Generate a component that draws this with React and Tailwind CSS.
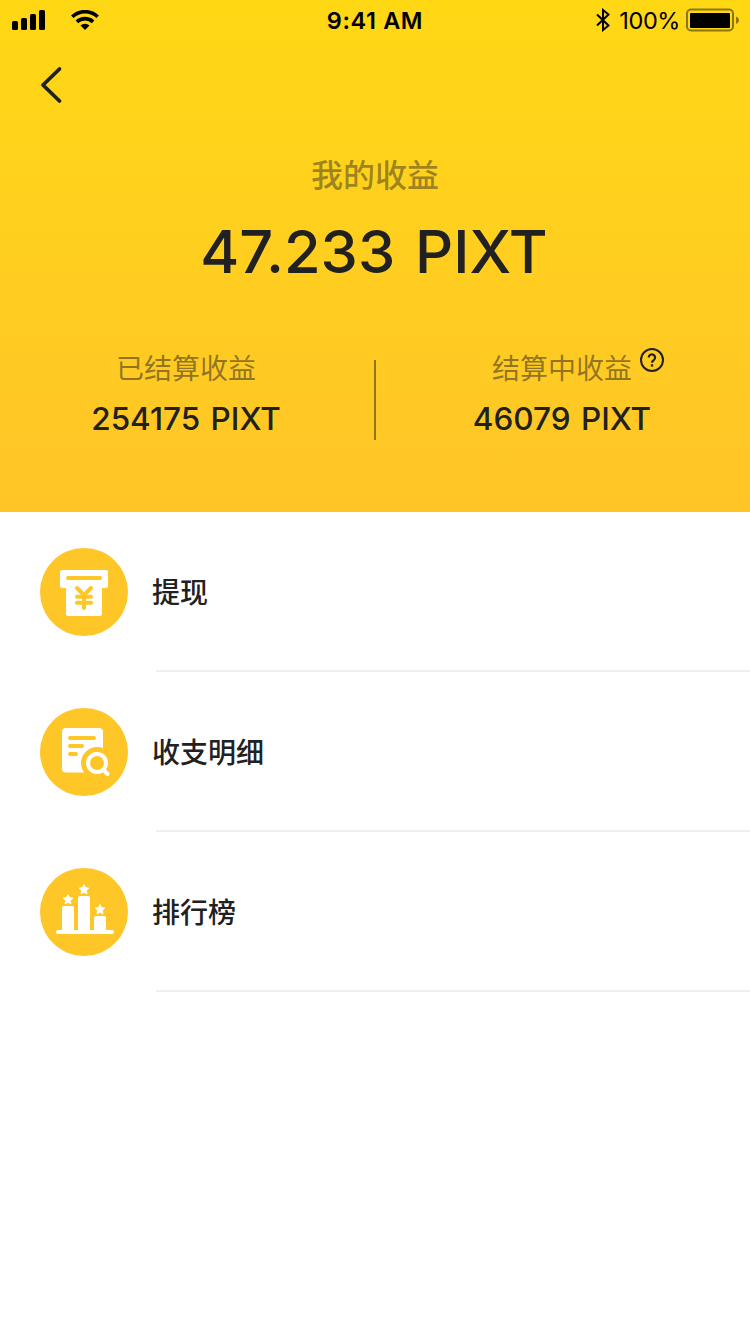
const menuItems = [
  { label: '提现', Icon: WithdrawIcon },
  { label: '收支明细', Icon: DetailsIcon },
  { label: '排行榜', Icon: RankingIcon },
];

function WithdrawIcon() {
  return (
    <svg viewBox="0 0 88 88" className="size-[88px] shrink-0">
      <circle cx="44" cy="44" r="44" fill="#ffc627" />
      <path d="M22 22h44a2 2 0 0 1 2 2v14a2 2 0 0 1-2 2h-4v26a2 2 0 0 1-2 2H28a2 2 0 0 1-2-2V40h-4a2 2 0 0 1-2-2V24a2 2 0 0 1 2-2z" fill="#fff" />
      <g stroke="#ffc627" strokeWidth="4" strokeLinecap="round" strokeLinejoin="round" fill="none">
        <path d="M28 30h32" />
        <path d="M37 40l7 7 7-7M37 48.700h14M37 54.700h14M44 47v13" />
      </g>
    </svg>
  );
}

function DetailsIcon() {
  return (
    <svg viewBox="0 0 88 88" className="size-[88px] shrink-0">
      <circle cx="44" cy="44" r="44" fill="#ffc627" />
      <rect x="22" y="20" width="41" height="44.500" rx="4" fill="#fff" />
      <path d="M30 30h24M30 38h12M30 46h6" stroke="#ffc627" strokeWidth="4" strokeLinecap="round" />
      <circle cx="57" cy="55" r="16" fill="#ffc627" />
      <circle cx="57" cy="55" r="9" fill="none" stroke="#fff" strokeWidth="4" />
      <path d="M63.500 62l4 4" stroke="#fff" strokeWidth="4" strokeLinecap="round" />
    </svg>
  );
}

function RankingIcon() {
  return (
    <svg viewBox="0 0 88 88" className="size-[88px] shrink-0">
      <circle cx="44" cy="44" r="44" fill="#ffc627" />
      <g fill="#fff">
        <rect x="16" y="62" width="58" height="4" rx="2" />
        <path d="M22 63V40a2 2 0 0 1 2-2h8a2 2 0 0 1 2 2v23zM38 63V30a2 2 0 0 1 2-2h8a2 2 0 0 1 2 2v33zM54 63V50a2 2 0 0 1 2-2h8a2 2 0 0 1 2 2v13z" />
        <g stroke="#fff" strokeWidth="0.800" strokeLinejoin="round">
          <path id="star" d="M44 16.500l1.500 3.100 3.400.5-2.500 2.400.6 3.400-3-1.600-3 1.600.6-3.400-2.500-2.400 3.400-.5z" />
          <use href="#star" x="-16" y="10" />
          <use href="#star" x="16" y="20" />
        </g>
      </g>
    </svg>
  );
}

function StatusBar() {
  return (
    <div className="grid h-10 grid-cols-3 items-center pr-[11px] pl-3 font-['Inter',sans-serif] text-[23.5px] text-black">
      <div className="flex items-center gap-[26px]">
        <svg viewBox="0 0 33 20" className="h-5 w-[33px]">
          <rect y="11" width="6" height="9" rx="1.500" />
          <rect x="9" y="8" width="6" height="12" rx="1.500" />
          <rect x="18" y="4" width="6" height="16" rx="1.500" />
          <rect x="27" width="6" height="20" rx="1.500" />
        </svg>
        <svg viewBox="0 0 28 20" className="h-5 w-7">
          <g fill="none" stroke="#000" strokeWidth="3.600">
            <path d="M1.300 6.800a18.200 18.200 0 0 1 25.400 0" />
            <path d="M5.900 11.900a11.700 11.700 0 0 1 16.200 0" />
          </g>
          <path d="M9.500 15.500a6.500 6.500 0 0 1 9 0L14 20z" />
        </svg>
      </div>
      <span className="pt-[2px] pr-px text-center font-semibold tracking-[0.6px] whitespace-nowrap">9:41 AM</span>
      <div className="flex items-center justify-end">
        <svg viewBox="0 0 14 24" className="mr-[9px] h-6 w-[14px]" fill="none" stroke="#000" strokeWidth="2">
          <path d="M1 6.500l11.500 11L7 22V2l5.500 4.500L1 17.500" />
        </svg>
        <span className="mr-[6px] pt-[2px] tracking-[-0.4px]">100%</span>
        <svg viewBox="0 0 53 24" className="h-6 w-[53px]">
          <rect x="1" y="1.500" width="46" height="21" rx="4" fill="none" stroke="#000" strokeOpacity="0.450" strokeWidth="2" />
          <rect x="4" y="5" width="40" height="15" rx="1" />
          <path d="M50 8.500c4 1.500 4 6 0 7.500z" fillOpacity="0.450" />
        </svg>
      </div>
    </div>
  );
}

function Earning({ label, value, help }) {
  return (
    <div className="flex w-[374px] flex-col items-center pr-[2px]">
      <div className="relative text-[28px] leading-[38px] text-[#212121]/50">
        {label}
        {help && (
          <svg viewBox="0 0 24 24" className="absolute top-0 left-[148px] size-6" fill="none" stroke="#212121" strokeWidth="2">
            <circle cx="12" cy="12" r="11" />
            <path d="M8.700 9.500a3.200 3.200 0 1 1 5 2.700c-1.100.7-1.700 1.200-1.700 2.600" strokeWidth="2.200" />
            <path d="M12 16.300v2.300" strokeWidth="2.400" />
          </svg>
        )}
      </div>
      <div className="mt-[10px] font-['Inter',sans-serif] text-[31.5px] leading-[46px] font-medium [word-spacing:2px] whitespace-nowrap">{value}</div>
    </div>
  );
}

export default function App() {
  return (
    <div className="min-h-[1334px] w-[750px] bg-white font-['Noto_Sans_CJK_SC',sans-serif] text-[#212121]">
      <header className="h-[512px] bg-linear-to-b from-[#ffd814] to-[#ffc527]">
        <StatusBar />
        <button className="mt-[26px] ml-10 block">
          <svg viewBox="0 0 24 38" className="h-[38px] w-6" fill="none" stroke="#212121" strokeWidth="3.800" strokeLinecap="round" strokeLinejoin="round">
            <path d="M19.500 3L3 19l16.500 16" />
          </svg>
        </button>
        <div className="mt-[46px] text-center text-[32px] leading-[46px] font-medium text-[#212121]/45">我的收益</div>
        <div className="mt-[13px] pr-[2px] text-center font-['Inter',sans-serif] text-[59.5px] leading-[84px] font-medium [word-spacing:4px]">47.233 PIXT</div>
        <div className="mt-[55px] flex">
          <Earning label="已结算收益" value="254175 PIXT" />
          <div className="mt-[12px] h-20 w-[2px] bg-[#212121]/50" />
          <Earning label="结算中收益" value="46079 PIXT" help />
        </div>
      </header>
      <ul>
        {menuItems.map(({ label, Icon }) => (
          <li key={label} className="flex h-40 items-center pl-10">
            <Icon />
            <div className="ml-7 flex h-full flex-1 items-center border-b-2 border-[#efefef]">
              <span className="-ml-1 text-[28px] leading-10 font-medium">{label}</span>
            </div>
          </li>
        ))}
      </ul>
    </div>
  );
}
